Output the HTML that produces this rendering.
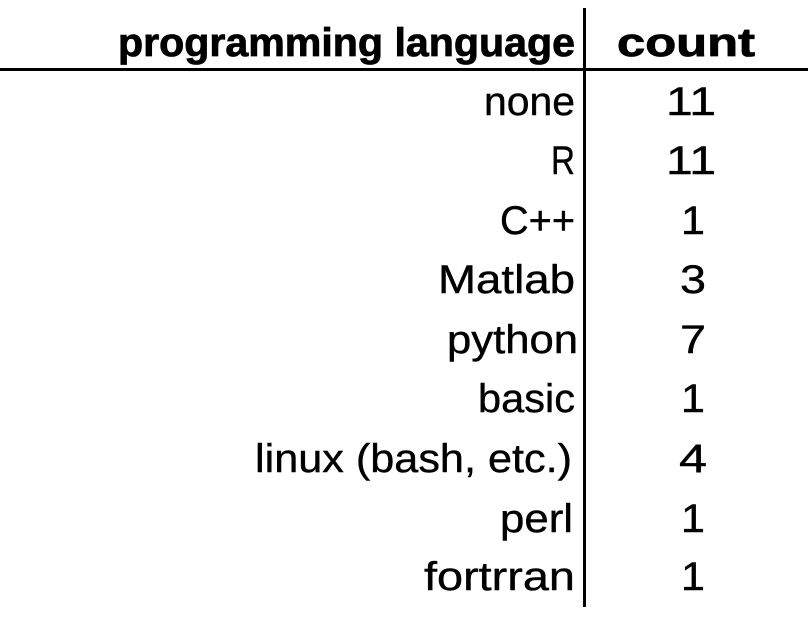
<!DOCTYPE html>
<html><head><meta charset="utf-8"><style>
html,body{margin:0;padding:0;background:#fff;}
svg{display:block;}
text{font-family:"Liberation Sans",sans-serif;fill:#000;}
</style></head><body>
<svg width="808" height="620" viewBox="0 0 808 620" xmlns="http://www.w3.org/2000/svg">
<rect x="583" y="8" width="3" height="599" fill="#000"/>
<rect x="0" y="68" width="808" height="3" fill="#000"/>
<g font-weight="bold" font-size="40" stroke="#000" stroke-width="0.8">
<text x="118" y="56" textLength="457" lengthAdjust="spacingAndGlyphs">programming language</text>
<text x="617" y="56" textLength="138" lengthAdjust="spacingAndGlyphs">count</text>
</g>
<g font-size="40" stroke="#000" stroke-width="0.4">
<text x="484" y="115" textLength="91" lengthAdjust="spacingAndGlyphs">none</text>
<text x="551" y="174" textLength="24" lengthAdjust="spacingAndGlyphs">R</text>
<text x="500" y="234" textLength="75" lengthAdjust="spacingAndGlyphs">C++</text>
<text x="438" y="293" textLength="137" lengthAdjust="spacingAndGlyphs">Matlab</text>
<text x="447" y="353" textLength="131" lengthAdjust="spacingAndGlyphs">python</text>
<text x="478" y="412" textLength="97" lengthAdjust="spacingAndGlyphs">basic</text>
<text x="255" y="472" textLength="317" lengthAdjust="spacingAndGlyphs">linux (bash, etc.)</text>
<text x="500" y="532" textLength="73" lengthAdjust="spacingAndGlyphs">perl</text>
<text x="424" y="590" textLength="151" lengthAdjust="spacingAndGlyphs">fortrran</text>
</g>
<g font-size="40" stroke="#000" stroke-width="0.4">
<text x="666" y="115" textLength="50" lengthAdjust="spacingAndGlyphs">11</text>
<text x="666" y="174" textLength="50" lengthAdjust="spacingAndGlyphs">11</text>
<text x="681" y="234" textLength="24" lengthAdjust="spacingAndGlyphs">1</text>
<text x="680" y="293" textLength="26" lengthAdjust="spacingAndGlyphs">3</text>
<text x="680" y="353" textLength="26" lengthAdjust="spacingAndGlyphs">7</text>
<text x="681" y="412" textLength="24" lengthAdjust="spacingAndGlyphs">1</text>
<text x="679" y="472" textLength="28" lengthAdjust="spacingAndGlyphs">4</text>
<text x="681" y="532" textLength="24" lengthAdjust="spacingAndGlyphs">1</text>
<text x="681" y="590" textLength="24" lengthAdjust="spacingAndGlyphs">1</text>
</g>
</svg>
</body></html>
